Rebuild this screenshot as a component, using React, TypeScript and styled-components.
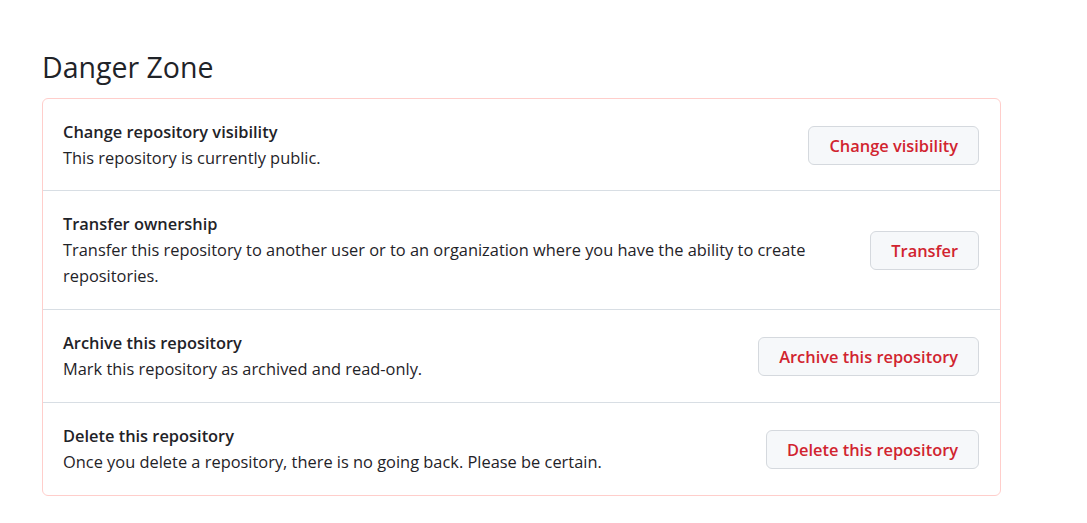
import styled, { createGlobalStyle } from "styled-components";

const GlobalStyle = createGlobalStyle`
  body {
    margin: 0;
    background: #fff;
    font-family: "Open Sans", "Noto Sans", "Liberation Sans", sans-serif;
    color: #1f2328;
  }
`

const Page = styled.div`
  padding: 50px 0 0 42px;
  width: 959px;
`

const Heading = styled.h2`
  margin: 0 0 13px;
  font-size: 28.5px;
  font-weight: 400;
  line-height: 35px;
`

const Box = styled.div`
  border: 1px solid #ffcecb;
  border-radius: 6px;
`

const Row = styled.div`
  display: flex;
  align-items: center;
  gap: 24px;
  padding: 20px 21px 20px 20px;
  &:first-child {
    padding-bottom: 19px;
  }
  & + & {
    border-top: 1px solid #d8dee4;
  }
`

const Info = styled.div`
  flex: 1;
  min-width: 0;
  font-size: 16.4px;
  line-height: 26px;
`

const Title = styled.div`
  font-weight: 600;
`

const Text = styled.div`
  font-weight: 400;
`

const Button = styled.button`
  flex-shrink: 0;
  height: 39px;
  padding: 0 20px;
  border: 1px solid #d5d9de;
  border-radius: 6px;
  background: #f6f8fa;
  color: #d1242f;
  font-family: inherit;
  font-size: 16.4px;
  font-weight: 600;
  cursor: pointer;
`

const rows = [
    {
        title: 'Change repository visibility',
        text: 'This repository is currently public.',
        action: 'Change visibility'
    },
    {
        title: 'Transfer ownership',
        text: 'Transfer this repository to another user or to an organization where you have the ability to create repositories.',
        action: 'Transfer'
    },
    {
        title: 'Archive this repository',
        text: 'Mark this repository as archived and read-only.',
        action: 'Archive this repository'
    },
    {
        title: 'Delete this repository',
        text: 'Once you delete a repository, there is no going back. Please be certain.',
        action: 'Delete this repository'
    }
]

export default function App() {
    return (
        <>
            <GlobalStyle/>
            <Page>
                <Heading>Danger Zone</Heading>
                <Box>
                    {rows.map(row => (
                        <Row key={row.title}>
                            <Info>
                                <Title>{row.title}</Title>
                                <Text>{row.text}</Text>
                            </Info>
                            <Button>{row.action}</Button>
                        </Row>
                    ))}
                </Box>
            </Page>
        </>
    )
}
